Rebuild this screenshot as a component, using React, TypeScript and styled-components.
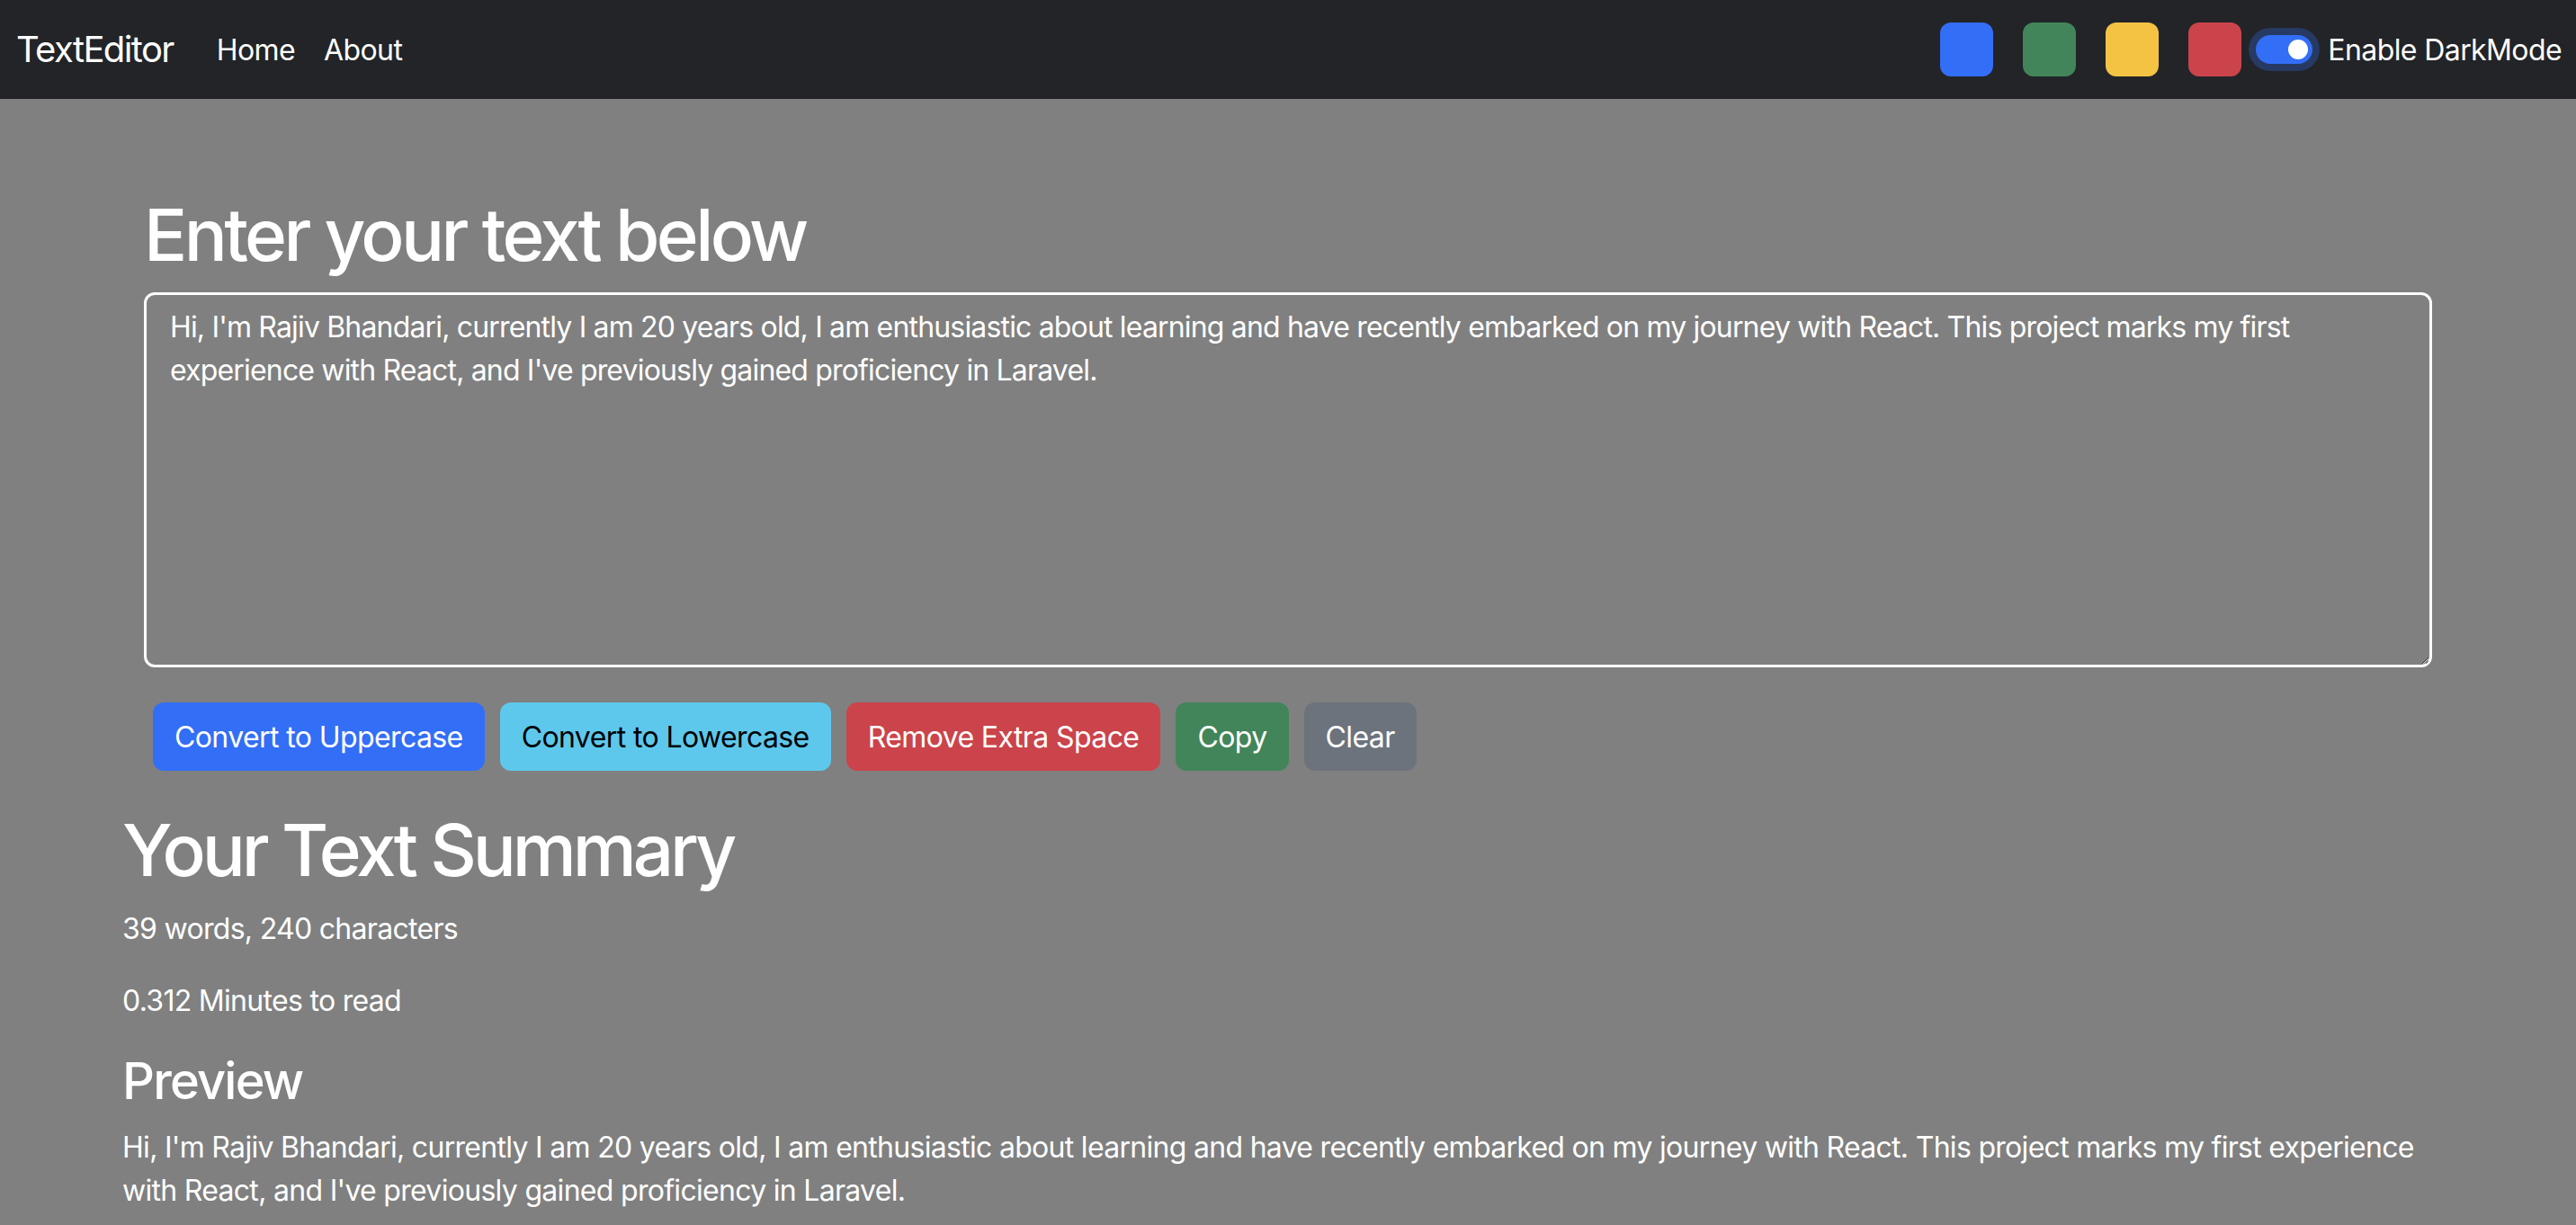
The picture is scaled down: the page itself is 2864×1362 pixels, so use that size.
import { useState } from "react";
import styled, { createGlobalStyle } from "styled-components";

const GlobalStyle = createGlobalStyle`
  html, body {
    margin: 0;
    padding: 0;
    background: #808080;
    font-family: "Inter", "Noto Sans", sans-serif;
    color: #ffffff;
  }
  * {
    box-sizing: border-box;
  }
`;

const INITIAL_TEXT =
  "Hi, I'm Rajiv Bhandari, currently I am 20 years old, I am enthusiastic about learning and have recently embarked on my journey with React. This project marks my first experience with React, and I've previously gained proficiency in Laravel.";

const swatches = ["#336ef6", "#42855a", "#f5c344", "#cb444b"];

type Variant = "primary" | "info" | "danger" | "success" | "secondary";

const buttonColors: Record<Variant, { bg: string; fg: string }> = {
  primary: { bg: "#336ef6", fg: "#ffffff" },
  info: { bg: "#5dc8ec", fg: "#000000" },
  danger: { bg: "#cb444b", fg: "#ffffff" },
  success: { bg: "#42855a", fg: "#ffffff" },
  secondary: { bg: "#6c737c", fg: "#ffffff" },
};

const App = () => {
  const [text, setText] = useState(INITIAL_TEXT);

  const words = text.split(/\s+/).filter((w) => w.length > 0).length;
  const minutes = Number((0.008 * words).toFixed(3));

  return (
    <>
      <GlobalStyle />
      <NavBar>
        <Brand>TextEditor</Brand>
        <NavLinks>
          <NavLink>Home</NavLink>
          <NavLink>About</NavLink>
        </NavLinks>
        <NavRight>
          <Swatches>
            {swatches.map((c) => (
              <Swatch key={c} $color={c} />
            ))}
          </Swatches>
          <SwitchWrap>
            <SwitchRing>
              <SwitchTrack>
                <SwitchKnob />
              </SwitchTrack>
            </SwitchRing>
            <SwitchLabel>Enable DarkMode</SwitchLabel>
          </SwitchWrap>
        </NavRight>
      </NavBar>

      <Page>
        <Editor>
          <Title>Enter your text below</Title>
          <TextBox
            value={text}
            onChange={(e) => setText(e.target.value)}
            spellCheck={false}
          />
          <ButtonRow>
            <ActionButton $variant="primary" onClick={() => setText(text.toUpperCase())}>
              Convert to Uppercase
            </ActionButton>
            <ActionButton $variant="info" onClick={() => setText(text.toLowerCase())}>
              Convert to Lowercase
            </ActionButton>
            <ActionButton
              $variant="danger"
              onClick={() => setText(text.split(/[ ]+/).join(" "))}
            >
              Remove Extra Space
            </ActionButton>
            <ActionButton $variant="success">Copy</ActionButton>
            <ActionButton $variant="secondary" onClick={() => setText("")}>
              Clear
            </ActionButton>
          </ButtonRow>
        </Editor>

        <Summary>
          <Title $tight>Your Text Summary</Title>
          <Para>
            {words} words, {text.length} characters
          </Para>
          <Para>{minutes} Minutes to read</Para>
          <SubTitle>Preview</SubTitle>
          <Para>{text}</Para>
        </Summary>
      </Page>
    </>
  );
};

const NavBar = styled.nav`
  height: 110px;
  background: #222428;
  display: flex;
  align-items: center;
  padding: 0 16px 0 18px;
`;

const Brand = styled.a`
  font-size: 40px;
  line-height: 1;
  color: #ffffff;
  margin-right: 32px;
  letter-spacing: -1.6px;
`;

const NavLinks = styled.div`
  display: flex;
  align-items: center;
`;

const NavLink = styled.a`
  font-size: 32px;
  color: #ffffff;
  padding: 16px;
  letter-spacing: -0.6px;
`;

const NavRight = styled.div`
  margin-left: auto;
  display: flex;
  align-items: center;
  gap: 8px;
`;

const Swatches = styled.div`
  display: flex;
  gap: 33px;
`;

const Swatch = styled.div<{ $color: string }>`
  width: 59px;
  height: 60px;
  border-radius: 12px;
  background: ${(p) => p.$color};
`;

const SwitchWrap = styled.label`
  display: flex;
  align-items: center;
  gap: 9px;
`;

const SwitchRing = styled.span`
  display: flex;
  padding: 8px;
  border-radius: 24px;
  background: #263a63;
`;

const SwitchTrack = styled.span`
  width: 63px;
  height: 32px;
  border-radius: 16px;
  background: #336ef6;
  display: flex;
  align-items: center;
  justify-content: flex-end;
  padding-right: 5px;
`;

const SwitchKnob = styled.span`
  width: 22px;
  height: 22px;
  border-radius: 50%;
  background: #ffffff;
`;

const SwitchLabel = styled.span`
  font-size: 32px;
  color: #ffffff;
  letter-spacing: -0.6px;
`;

const Page = styled.main`
  width: 2640px;
  margin: 0 auto;
  padding: 103px 24px 0;
`;

const Editor = styled.section`
  padding: 0 24px;
`;

const Title = styled.h1<{ $tight?: boolean }>`
  font-size: 80px;
  font-weight: 500;
  line-height: 1.2;
  margin: 0 0 16px;
  letter-spacing: ${(p) => (p.$tight ? "-4.1px" : "-3.6px")};
`;

const SubTitle = styled.h3`
  font-size: 56px;
  font-weight: 500;
  line-height: 1.2;
  margin: 0 0 16px;
  letter-spacing: -1.8px;
`;

const TextBox = styled.textarea`
  display: block;
  width: 100%;
  height: 417px;
  background: #808080;
  color: #ffffff;
  border: 3px solid #ffffff;
  border-radius: 12px;
  padding: 12px 24px 12px 26px;
  font-family: "Inter", "Noto Sans", sans-serif;
  font-size: 32px;
  line-height: 1.5;
  letter-spacing: -0.83px;
  outline: none;
  margin-bottom: 39px;
`;

const ButtonRow = styled.div`
  display: flex;
  gap: 17px;
  padding-left: 10px;
  margin-bottom: 40px;
`;

const ActionButton = styled.button<{ $variant: Variant }>`
  height: 76px;
  padding: 0 24px;
  border: none;
  border-radius: 12px;
  font-family: inherit;
  font-size: 32px;
  letter-spacing: -0.6px;
  background: ${(p) => buttonColors[p.$variant].bg};
  color: ${(p) => buttonColors[p.$variant].fg};
  cursor: pointer;
`;

const Summary = styled.section``;

const Para = styled.p`
  font-size: 32px;
  line-height: 1.5;
  margin: 0 0 32px;
  letter-spacing: -0.7px;
`;

export default App;
